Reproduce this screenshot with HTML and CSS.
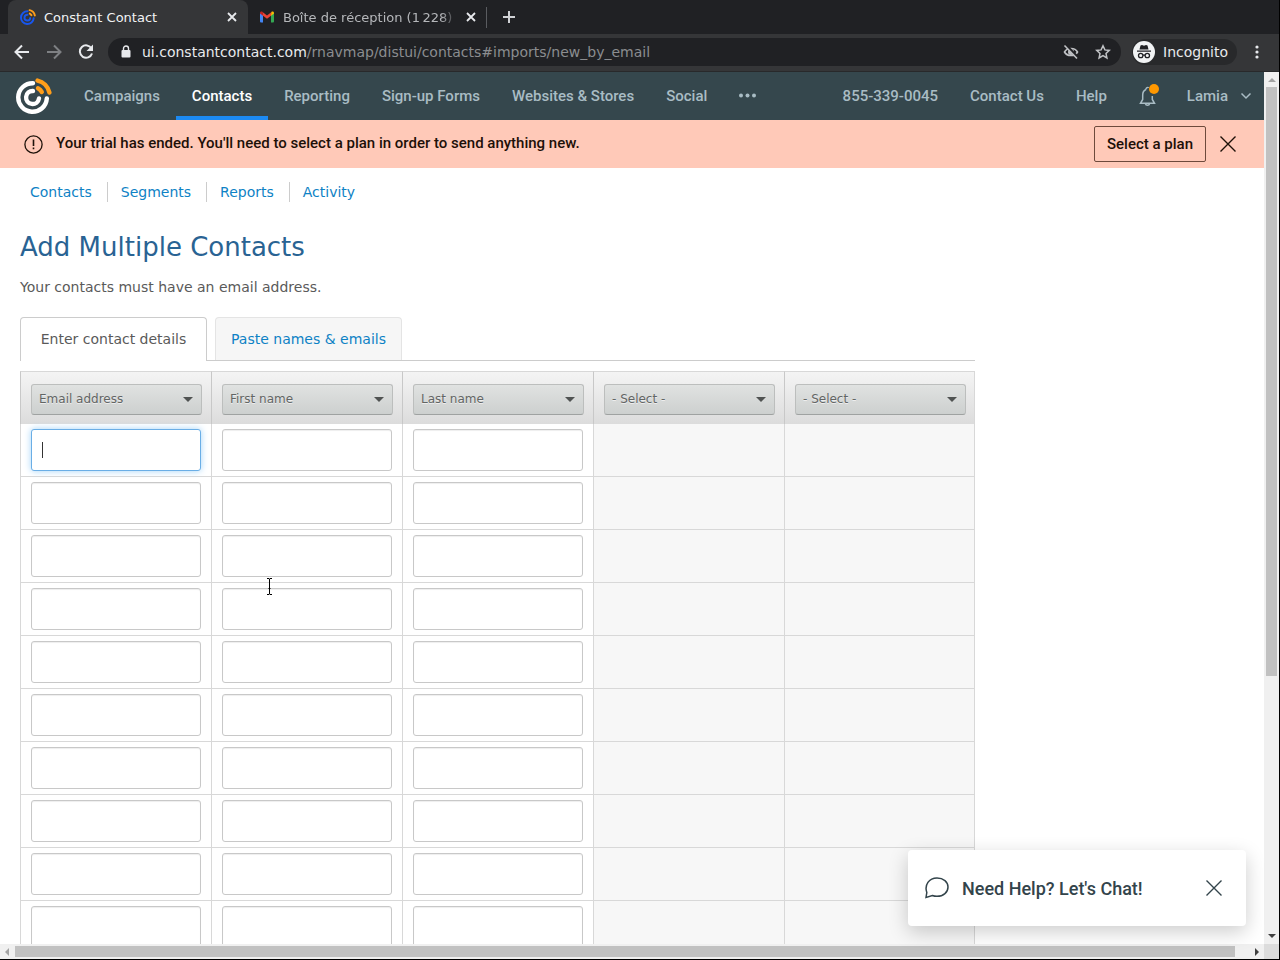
FILE: index.html
```html
<!DOCTYPE html>
<html lang="en">
<head>
    <meta charset="UTF-8">
    <meta name="viewport" content="width=device-width, initial-scale=1.0">
    <title>Constant Contact</title>
    <link rel="stylesheet" href="styles.css">
</head>
<body>
    <!-- Browser tabs -->
    <div class="tab-strip">
        <div class="browser-tab active">
            <svg class="favicon" viewBox="0 0 36 36" fill="none" stroke-width="4.4" stroke-linecap="round">
                <g stroke="#1856ed">
                    <path d="M17 5.200A14.300 14.300 0 1 0 30.800 20.500"/>
                    <path d="M17 13A6.500 6.500 0 1 0 23 20.500"/>
                </g>
                <g stroke="#ff9e1a">
                    <path d="M21.500 2.600A15.500 15.500 0 0 1 33.400 14.500"/>
                    <path d="M22 10.200A8 8 0 0 1 25.800 14"/>
                </g>
            </svg>
            <span class="tab-title">Constant Contact</span>
            <button class="tab-close" aria-label="Close tab">
                <svg width="10" height="10" viewBox="0 0 10 10" stroke="currentColor" stroke-width="1.8"><path d="M1 1l8 8M9 1l-8 8"/></svg>
            </button>
        </div>
        <div class="browser-tab">
            <svg class="favicon" viewBox="0 0 16 16">
                <path fill="#4285f4" d="M1 3.500l3 2.500v7.500H2a1 1 0 0 1-1-1z"/>
                <path fill="#34a853" d="M12 6l3-2.500v9a1 1 0 0 1-1 1h-2z"/>
                <path fill="#ea4335" d="M3.200 2.800L8 6.500l4.800-3.700L12 6.700 8 9.800 4 6.700z"/>
                <path fill="#c5221f" d="M1 4c0-1.500 1.500-2 2.600-1.100L4 6.700 1 4.500z"/>
                <path fill="#fbbc04" d="M15 4c0-1.500-1.500-2-2.600-1.100L12 6.700l3-2.200z"/>
            </svg>
            <span class="tab-title faded">Boîte de réception (1&#8239;228)</span>
            <button class="tab-close" aria-label="Close tab">
                <svg width="10" height="10" viewBox="0 0 10 10" stroke="currentColor" stroke-width="1.8"><path d="M1 1l8 8M9 1l-8 8"/></svg>
            </button>
        </div>
        <button class="new-tab" aria-label="New tab">
            <svg width="14" height="14" viewBox="0 0 14 14" stroke="currentColor" stroke-width="2"><path d="M7 1v12M1 7h12"/></svg>
        </button>
    </div>

    <!-- Address bar -->
    <div class="toolbar">
        <button class="tool-btn" aria-label="Back">
            <svg width="16" height="16" viewBox="0 0 16 16" fill="none" stroke="currentColor" stroke-width="2"><path d="M15 8H2M8 1.500L1.500 8 8 14.500"/></svg>
        </button>
        <button class="tool-btn dim" aria-label="Forward">
            <svg width="16" height="16" viewBox="0 0 16 16" fill="none" stroke="currentColor" stroke-width="2"><path d="M1 8h13M8 1.500L14.500 8 8 14.500"/></svg>
        </button>
        <button class="tool-btn" aria-label="Reload">
            <svg width="16" height="16" viewBox="0 0 16 16" fill="none" stroke="currentColor" stroke-width="2"><path d="M13.500 4.500A6.200 6.200 0 1 0 14 9.500"/><path fill="currentColor" stroke="none" d="M15 0.500V7H8.500z"/></svg>
        </button>
        <div class="address">
            <svg width="10" height="14" viewBox="0 0 10 14"><rect x="0.500" y="5" width="9" height="7.500" rx="1" fill="#e8eaed"/><path d="M2.500 5.500V3.500a2.500 2.500 0 0 1 5 0v2" fill="none" stroke="#e8eaed" stroke-width="1.400"/></svg>
            <span class="url"><span class="host">ui.constantcontact.com</span>/rnavmap/distui/contacts#imports/new_by_email</span>
            <svg width="16" height="16" viewBox="0 0 16 16" fill="none" stroke="#c0c2c5" stroke-width="1.600"><path d="M1.500 8C4 3.300 12 3.300 14.500 8 12 12.700 4 12.700 1.500 8z"/><circle cx="8" cy="8" r="2.200" fill="#c0c2c5"/><path stroke="#202124" stroke-width="3" d="M3 1.500l12 12"/><path d="M1.500 1.500l12.500 13"/></svg>
            <svg class="star" width="16" height="16" viewBox="0 0 16 16" fill="none" stroke="#c0c2c5" stroke-width="1.500"><path d="M8 1.800l1.900 4.100 4.400.5-3.300 3 .9 4.500L8 11.600l-3.900 2.300.9-4.500-3.300-3 4.400-.5z"/></svg>
        </div>
        <div class="incognito">
            <svg width="22" height="22" viewBox="0 0 22 22">
                <circle cx="11" cy="11" r="11" fill="#f1f3f4"/>
                <path fill="#202124" d="M7.500 4.500l1.500-.5 2 .7 2-.7 1.500.5 1 4h-9zM4 9.500h14v1.200H4z"/>
                <g fill="none" stroke="#202124" stroke-width="1.300"><circle cx="7.700" cy="14.500" r="2.200"/><circle cx="14.300" cy="14.500" r="2.200"/><path d="M10 14.200h2"/></g>
            </svg>
            <span>Incognito</span>
        </div>
        <button class="menu-btn" aria-label="Browser menu">
            <svg width="4" height="14" viewBox="0 0 4 14" fill="currentColor"><circle cx="2" cy="2" r="1.600"/><circle cx="2" cy="7" r="1.600"/><circle cx="2" cy="12" r="1.600"/></svg>
        </button>
    </div>

    <div class="viewport">
        <div class="page">
            <header class="top-nav">
                <a href="#" class="logo" aria-label="Home">
                    <svg width="36" height="36" viewBox="0 0 36 36" fill="none" stroke-width="4.4" stroke-linecap="round">
                        <g stroke="#fff">
                            <path d="M17 5.200A14.300 14.300 0 1 0 30.800 20.500"/>
                            <path d="M17 13A6.500 6.500 0 1 0 23 20.500"/>
                        </g>
                        <g stroke="#ff9e1a">
                            <path d="M21.500 2.600A15.500 15.500 0 0 1 33.400 14.500"/>
                            <path d="M22 10.200A8 8 0 0 1 25.800 14"/>
                        </g>
                    </svg>
                </a>
                <nav class="nav-links">
                    <a href="#">Campaigns</a>
                    <a href="#" class="current">Contacts</a>
                    <a href="#">Reporting</a>
                    <a href="#">Sign-up Forms</a>
                    <a href="#">Websites &amp; Stores</a>
                    <a href="#">Social</a>
                    <a href="#" aria-label="More">
                        <svg width="18" height="6" viewBox="0 0 18 6" fill="currentColor"><circle cx="2" cy="2.500" r="2"/><circle cx="8.500" cy="2.500" r="2"/><circle cx="15" cy="2.500" r="2"/></svg>
                    </a>
                </nav>
                <div class="nav-links account">
                    <a href="#">855-339-0045</a>
                    <a href="#">Contact Us</a>
                    <a href="#">Help</a>
                    <a href="#" class="bell" aria-label="Notifications">
                        <svg width="20" height="24" viewBox="0 0 20 24" fill="none" stroke="currentColor" stroke-width="1.500">
                            <path d="M7 5.500C4.500 6.500 3.700 8.500 3.700 11v4.500L1.500 19.300h14l-2.200-3.800V12"/>
                            <path d="M7 5.500C6.800 3.500 9 3 9.500 4M6.500 19.800c.3 1.900 3.700 1.900 4 0"/>
                            <circle cx="15" cy="5" r="5" fill="#ff9800" stroke="none"/>
                        </svg>
                    </a>
                    <a href="#" class="user">Lamia
                        <svg width="12" height="8" viewBox="0 0 12 8" fill="none" stroke="currentColor" stroke-width="1.500"><path d="M1.500 1.500L6 6l4.500-4.500"/></svg>
                    </a>
                </div>
            </header>

            <div class="trial-banner">
                <svg width="19" height="19" viewBox="0 0 19 19" fill="none" stroke="#1d1008" stroke-width="1.300"><circle cx="9.500" cy="9.500" r="8.600"/><path stroke-width="1.600" d="M9.500 4.500v6.500M9.500 12.500v1.800"/></svg>
                <p>Your trial has ended. You'll need to select a plan in order to send anything new.</p>
                <button class="plan-btn">Select a plan</button>
                <button class="icon-btn" aria-label="Dismiss">
                    <svg width="16" height="16" viewBox="0 0 16 16" stroke="#1d1008" stroke-width="1.400"><path d="M.5.5l15 15M15.500.5l-15 15"/></svg>
                </button>
            </div>

            <main class="content">
                <nav class="sub-nav">
                    <a href="#">Contacts</a>
                    <a href="#">Segments</a>
                    <a href="#">Reports</a>
                    <a href="#">Activity</a>
                </nav>

                <h1>Add Multiple Contacts</h1>
                <p class="intro">Your contacts must have an email address.</p>

                <div class="tabs" role="tablist">
                    <button class="tab selected" role="tab" aria-selected="true">Enter contact details</button>
                    <button class="tab" role="tab" aria-selected="false">Paste names &amp; emails</button>
                </div>

                <table class="contact-table">
                    <thead>
                        <tr>
                            <th><div class="select-wrap"><select aria-label="Column 1"><option>Email address</option></select></div></th>
                            <th><div class="select-wrap"><select aria-label="Column 2"><option>First name</option></select></div></th>
                            <th><div class="select-wrap"><select aria-label="Column 3"><option>Last name</option></select></div></th>
                            <th><div class="select-wrap"><select aria-label="Column 4"><option>- Select -</option></select></div></th>
                            <th><div class="select-wrap"><select aria-label="Column 5"><option>- Select -</option></select></div></th>
                        </tr>
                    </thead>
                    <tbody id="contactRows"></tbody>
                </table>
            </main>

            <svg class="pointer" width="7" height="17" viewBox="0 0 7 17" fill="none" stroke="#000"><path d="M1 .5h2l.5.500.5-.5h2M1 16.500h2l.5-.5.500.5h2M3.500 1v15M2.500 10.500h2"/></svg>
        </div>

        <div class="scrollbar-y">
            <span class="arrow up"></span>
            <div class="track-y"><div class="thumb"></div></div>
            <span class="arrow down"></span>
        </div>

        <div class="chat">
            <svg width="24" height="22" viewBox="0 0 24 22" fill="none" stroke="#33444b" stroke-width="1.500"><path d="M1 20.500l.8-5C-.8 8 4 1 12 1c6.500 0 11 3.800 11 9s-4.500 9.300-11 9.300c-1.800 0-3.300-.3-4.600-.8z"/></svg>
            <span>Need Help? Let's Chat!</span>
            <button class="icon-btn" aria-label="Close chat">
                <svg width="16" height="16" viewBox="0 0 16 16" stroke="#33444b" stroke-width="1.400"><path d="M.5.5l15 15M15.500.5l-15 15"/></svg>
            </button>
        </div>
    </div>

    <div class="scrollbar-x">
        <span class="arrow left"></span>
        <div class="track-x"><div class="thumb"></div></div>
        <span class="arrow right"></span>
        <span class="corner"></span>
    </div>

    <script src="app.js"></script>
</body>
</html>
```

FILE: styles.css
```css
* {
    margin: 0;
    padding: 0;
    box-sizing: border-box;
}

body {
    font-family: "DejaVu Sans", sans-serif;
    font-size: 14px;
    color: #5a5a5a;
    background: #fff;
    height: 100vh;
    display: flex;
    flex-direction: column;
    overflow: hidden;
    border-right: 1px solid #000;
    border-bottom: 1px solid #000;
}

a {
    text-decoration: none;
}

button {
    font: inherit;
    color: inherit;
    background: none;
    border: none;
    cursor: pointer;
}

svg {
    display: block;
    flex: none;
}

/* Browser tabs */
.tab-strip {
    display: flex;
    height: 34px;
    padding-left: 8px;
    background: #202124;
    flex: none;
}

.browser-tab {
    display: flex;
    align-items: center;
    gap: 8px;
    width: 240px;
    padding: 0 10px 0 12px;
    font-size: 13px;
    color: #b5b7ba;
}

.browser-tab.active {
    background: #353638;
    color: #f1f3f4;
    border-radius: 8px 8px 0 0;
}

.browser-tab:not(.active) {
    width: 239px;
    padding: 0 9px 0 11px;
    border-right: 1px solid #4a4c50;
    border-image: linear-gradient(transparent 8px, #5a5c60 8px, #5a5c60 27px, transparent 27px) 1;
}

.favicon {
    width: 16px;
    height: 16px;
}

.tab-title {
    flex: 1;
    white-space: nowrap;
}

.tab-title.faded {
    -webkit-mask-image: linear-gradient(to right, #000 158px, transparent 174px);
    mask-image: linear-gradient(to right, #000 158px, transparent 174px);
}

.tab-close {
    color: #e8eaed;
    width: 12px;
    display: flex;
    justify-content: center;
}

.new-tab {
    color: #d0d2d5;
    width: 44px;
    display: flex;
    align-items: center;
    justify-content: center;
}

/* Address bar */
.toolbar {
    display: flex;
    align-items: center;
    height: 38px;
    padding: 0 20px 2px 6px;
    background: #353638;
    border-bottom: 1px solid #28292b;
    flex: none;
}

.tool-btn {
    width: 32px;
    height: 28px;
    display: flex;
    align-items: center;
    justify-content: center;
    color: #e8eaed;
}

.tool-btn.dim {
    color: #7e8083;
}

.address {
    flex: 1;
    display: flex;
    align-items: center;
    gap: 11px;
    height: 28px;
    margin: 0 11px 0 6px;
    padding: 0 10px 0 13px;
    border-radius: 14px;
    background: #202124;
}

.url {
    flex: 1;
    color: #8b8d90;
    white-space: nowrap;
}

.host {
    color: #e8eaed;
}

.star {
    margin-left: 5px;
}

.incognito {
    display: flex;
    align-items: center;
    gap: 8px;
    height: 26px;
    padding: 0 9px 0 1px;
    border-radius: 13px;
    background: #28292b;
    color: #e8eaed;
}

.menu-btn {
    margin-left: 18px;
    color: #e8eaed;
}

/* Page area */
.viewport {
    flex: 1;
    display: flex;
    min-height: 0;
    position: relative;
}

.page {
    flex: 1;
    min-width: 0;
    overflow: hidden;
    position: relative;
}

.top-nav {
    display: flex;
    height: 48px;
    background: #35474d;
    font-family: Roboto, sans-serif;
    font-size: 15px;
    font-weight: 500;
}

.logo {
    display: flex;
    align-items: center;
    padding: 0 16px;
}

.nav-links {
    display: flex;
}

.nav-links a {
    display: flex;
    align-items: center;
    padding: 0 16px;
    color: #a9bcc4;
    border-top: 4px solid transparent;
    border-bottom: 4px solid transparent;
}

.nav-links .current {
    color: #fff;
    border-bottom-color: #1c8af2;
}

.account {
    margin-left: auto;
}

.nav-links .bell {
    padding: 0 12px 0 16px;
}

.nav-links .user {
    gap: 12px;
    padding-right: 12px;
}

.trial-banner {
    display: flex;
    align-items: center;
    height: 48px;
    padding: 0 24px;
    background: #ffc9b8;
    color: #1d1008;
    font-family: Roboto, sans-serif;
    font-size: 15px;
    font-weight: 500;
}

.trial-banner p {
    flex: 1;
    margin-left: 13px;
    padding-bottom: 2px;
}

.plan-btn {
    height: 36px;
    padding: 0 12px;
    border: 1px solid #6e4a3c;
    border-radius: 2px;
}

.icon-btn {
    display: flex;
}

.trial-banner .icon-btn {
    margin-left: 10px;
    padding: 4px;
}

.content {
    padding: 14px 20px 0;
}

.sub-nav {
    display: flex;
    height: 20px;
    line-height: 20px;
    padding-left: 10px;
}

.sub-nav a {
    color: #0e82c5;
    padding-right: 15px;
}

.sub-nav a + a {
    padding-left: 13px;
    border-left: 1px solid #ccc;
}

h1 {
    margin-top: 29px;
    font-size: 26px;
    line-height: 32px;
    font-weight: 400;
    color: #296393;
}

.intro {
    margin-top: 14px;
    line-height: 20px;
}

.tabs {
    display: flex;
    gap: 8px;
    max-width: 955px;
    margin-top: 20px;
    border-bottom: 1px solid #ccc;
}

.tab {
    width: 187px;
    height: 43px;
    border: 1px solid #e4e4e4;
    border-bottom: none;
    border-radius: 4px 4px 0 0;
    background: #f6f6f6;
    color: #0e82c5;
}

.tab.selected {
    height: 44px;
    margin-bottom: -1px;
    padding-bottom: 1px;
    border-color: #ccc;
    background: #fff;
    color: #5a5a5a;
}

/* Contact grid */
.contact-table {
    width: 100%;
    max-width: 955px;
    margin-top: 10px;
    table-layout: fixed;
    border-collapse: separate;
    border-spacing: 0;
}

.contact-table th {
    padding: 12px 9px 9px 10px;
    border-top: 1px solid #d8d8d8;
    border-left: 1px solid #c8c8c8;
    background: linear-gradient(#f4f4f4, #dcdcdc);
}

.contact-table td {
    height: 53px;
    padding: 5px 10px;
    border-left: 1px solid #d8d8d8;
    border-bottom: 1px solid #d8d8d8;
    position: relative;
}

.contact-table td.empty {
    background: #f7f7f7;
}

.contact-table th:last-child,
.contact-table td:last-child {
    padding-right: 8px;
    border-right: 1px solid #d8d8d8;
}

.select-wrap {
    position: relative;
}

.select-wrap::after {
    content: "";
    position: absolute;
    right: 9px;
    top: 13px;
    border: 5px solid transparent;
    border-top-color: #505352;
    border-bottom: none;
    pointer-events: none;
}

.select-wrap select {
    display: block;
    appearance: none;
    width: 100%;
    height: 31px;
    padding: 0 7px 2px;
    border: 1px solid #bcbebd;
    border-bottom-color: #9fa2a1;
    border-radius: 3px;
    background: linear-gradient(#e0e2e1, #cdd0cf);
    color: #626564;
    font-family: inherit;
    font-size: 12px;
    text-shadow: 0 1px 0 #eee;
}

.contact-table input {
    display: block;
    width: 100%;
    height: 42px;
    padding: 0 10px;
    border: 1px solid #c8c8c8;
    border-radius: 3px;
    background: #fff;
    box-shadow: inset 0 1px 1px #eee;
    font: inherit;
}

.contact-table input.focused {
    border-color: #6aaee6;
    box-shadow: 0 0 7px #a3d4f8;
    outline: none;
}

.caret {
    position: absolute;
    left: 21px;
    top: 18px;
    width: 1px;
    height: 16px;
    background: #333;
}

.pointer {
    position: absolute;
    left: 266px;
    top: 506px;
}

/* Scrollbars */
.scrollbar-y {
    display: flex;
    flex-direction: column;
    align-items: center;
    width: 15px;
    padding: 6px 0;
    background: #f0f0f0;
}

.track-y {
    flex: 1;
    width: 11px;
    margin: 5px 0 6px;
}

.track-y .thumb {
    height: 70%;
    background: #c1c1c1;
}

.scrollbar-x {
    display: flex;
    align-items: center;
    height: 15px;
    padding-left: 5px;
    background: #f0f0f0;
    flex: none;
}

.track-x {
    flex: 1;
    height: 11px;
    margin: 0 8px 0 6px;
}

.track-x .thumb {
    width: 99%;
    height: 100%;
    background: #c1c1c1;
}

.arrow {
    border: 4px solid transparent;
}

.arrow.up {
    border-top: none;
    border-bottom-color: #a3a3a3;
}

.arrow.down {
    border-bottom: none;
    border-top-color: #404040;
}

.arrow.left {
    border-left: none;
    border-right-color: #a3a3a3;
}

.arrow.right {
    border-right: none;
    border-left-color: #404040;
    margin-right: 5px;
}

.corner {
    width: 15px;
    height: 15px;
    background: #dcdcdc;
}

/* Chat prompt */
.chat {
    position: absolute;
    right: 33px;
    bottom: 18px;
    display: flex;
    align-items: center;
    width: 338px;
    height: 76px;
    padding: 0 24px 0 17px;
    border-radius: 4px;
    background: #fff;
    box-shadow: 0 6px 20px rgba(0, 0, 0, 0.2);
    color: #33444b;
    font-family: Roboto, sans-serif;
    font-size: 18px;
    font-weight: 500;
}

.chat span {
    flex: 1;
    margin-left: 13px;
}
```

FILE: app.js
```js
const contactRows = document.getElementById('contactRows');
const fields = ['Email address', 'First name', 'Last name'];

for (let i = 1; i <= 10; i++) {
    const cells = fields.map((field, col) => {
        const focused = i === 1 && col === 0;
        return `<td><input type="text" aria-label="${field} ${i}"${focused ? ' class="focused"' : ''}>${focused ? '<span class="caret"></span>' : ''}</td>`;
    }).join('');

    contactRows.insertAdjacentHTML('beforeend', `<tr>${cells}<td class="empty"></td><td class="empty"></td></tr>`);
}
```
